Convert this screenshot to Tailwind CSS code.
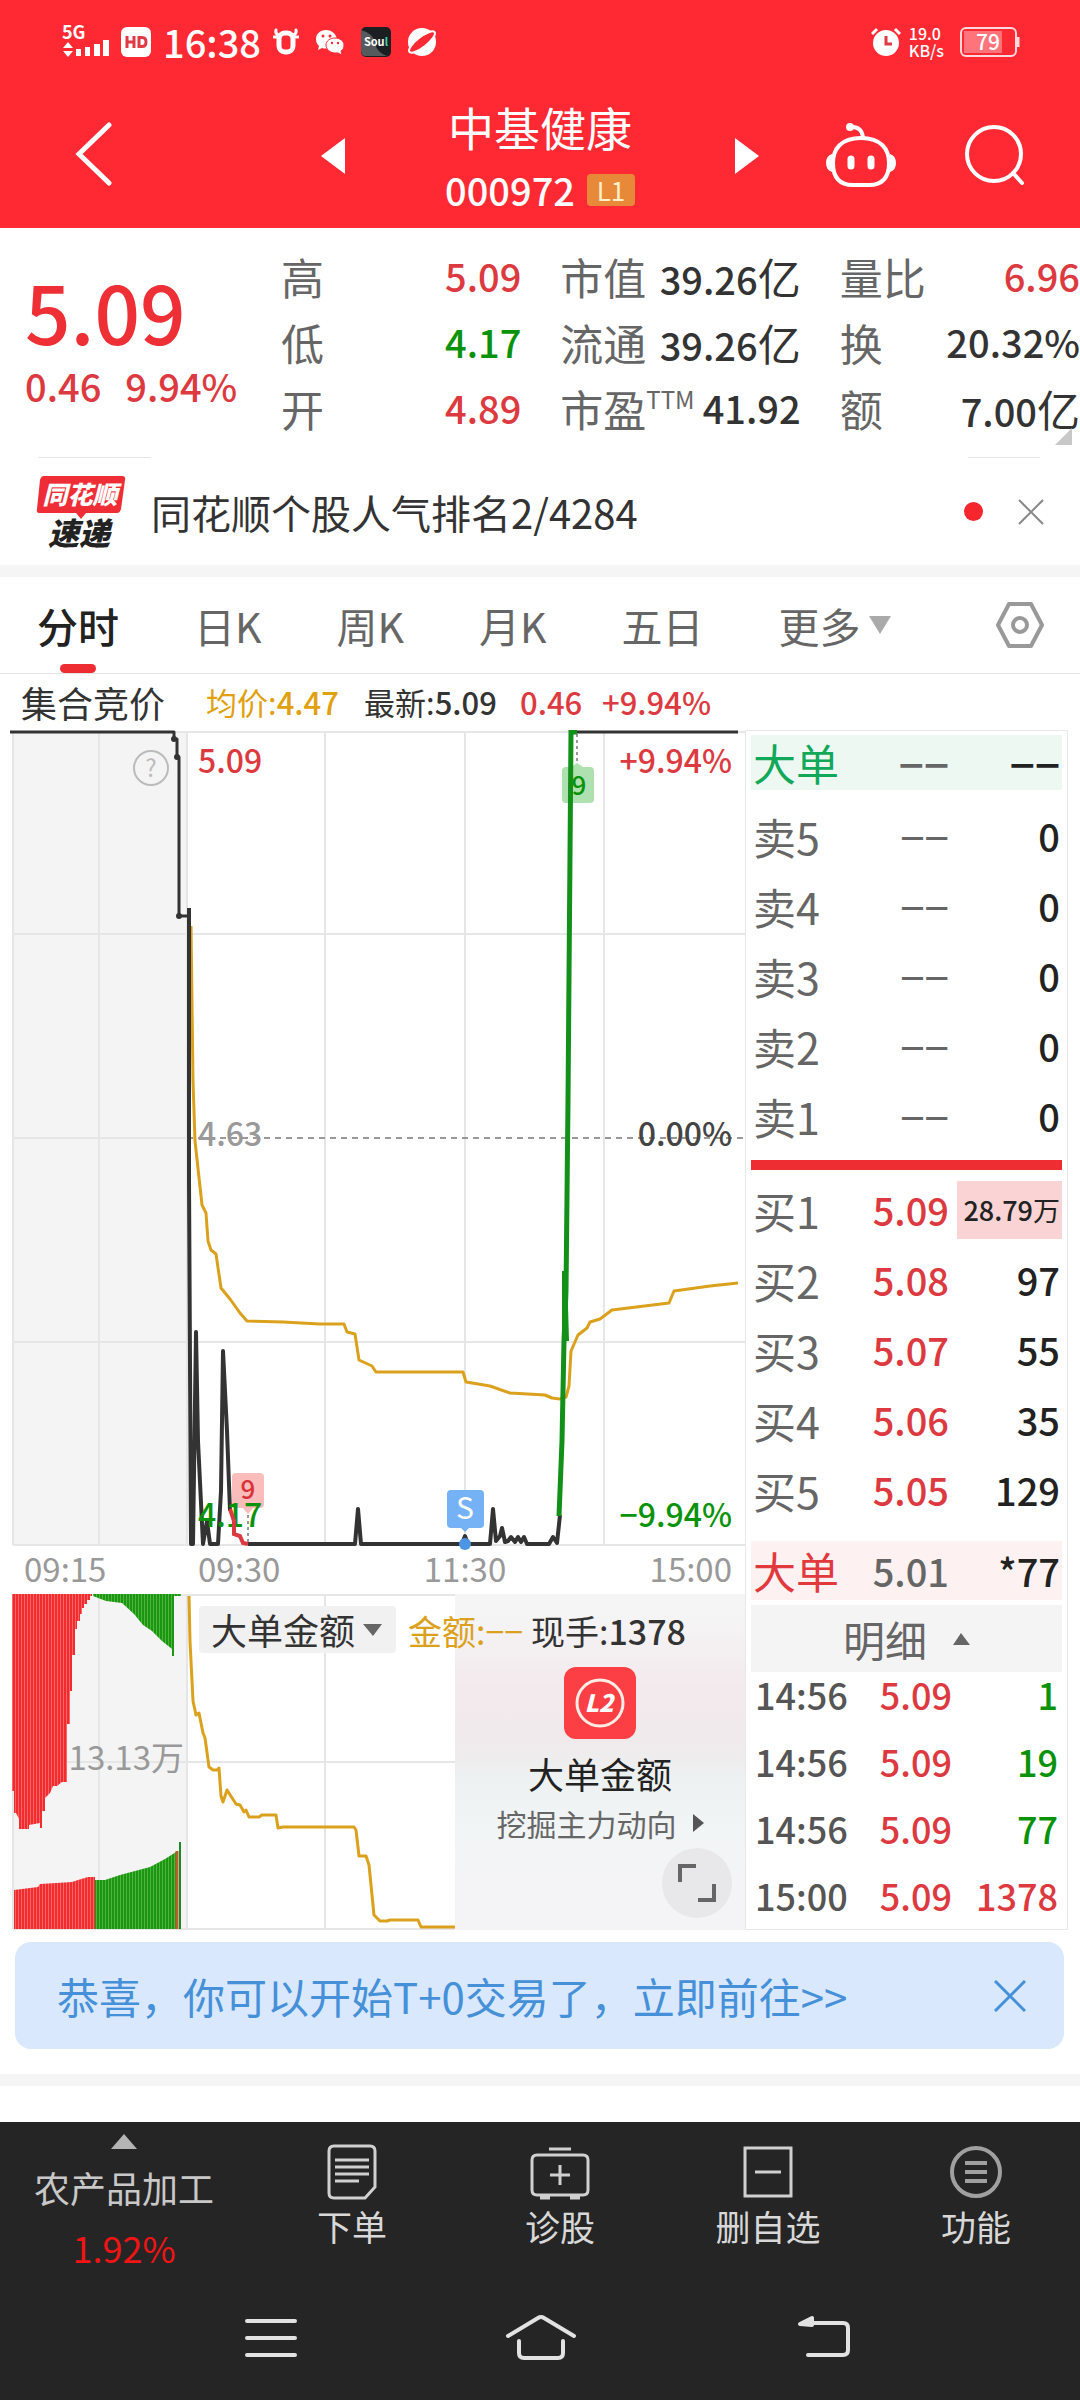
<!DOCTYPE html>
<html lang="zh-CN">
<head>
  <meta charset="UTF-8" />
  <meta name="viewport" content="width=device-width, initial-scale=1.0"/>
  <title>中基健康 000972</title>
  <script src="https://cdn.jsdelivr.net/npm/@tailwindcss/browser@4"></script>
</head>
<body class="bg-white text-[#333] font-['Noto_Sans_CJK_SC','Noto_Sans',sans-serif]">

  <!-- Header -->
  <header class="bg-[#ff2934] text-white">
    <!-- Status bar -->
    <div class="flex items-center justify-between h-[84px] pl-[61px] pr-[60px]">
      <div class="flex items-center gap-3">
        <svg class="w-12 h-9 overflow-visible" viewBox="0 0 48 36" fill="#fff">
          <text x="1" y="15" font-size="18" font-weight="700">5G</text>
          <path d="M2 24l5-6 5 6zM2 27h10l-5 6z"/>
          <path d="M15 25h5v7h-5zM24 23h5v9h-5zM33 20h6v12h-6zM42 16h6v16h-6z"/>
        </svg>
        <svg class="w-[30px] h-[30px]" viewBox="0 0 30 30">
          <rect width="30" height="30" rx="6" fill="#fff"/>
          <path d="M6 9v12M13 9v12M6 15h7M18 9v12M18 10.500h3q4 0 4 4.500t-4 4.500h-3" fill="none" stroke="#e03a45" stroke-width="3"/>
        </svg>
        <span class="text-[38px] leading-[38px] font-medium">16:38</span>
        <div class="flex items-center gap-4">
          <svg class="w-[26px] h-[30px]" viewBox="0 0 26 30" fill="none" stroke="#fff" stroke-linecap="round">
            <rect x="6" y="6" width="14" height="19" rx="6" stroke-width="5"/>
            <path d="M6 8Q2 7 3 3M20 8q4-1 3-5M1 10h4M21 10h4" stroke-width="3"/>
          </svg>
          <svg class="w-[30px] h-[30px]" viewBox="0 0 30 30">
            <path d="M11 3C5 3 1 7 1 12c0 3 1 5 3 7l-1 4 4-2q4 1 7 0l8-7C22 7 17 3 11 3z" fill="#fff"/>
            <path d="M20 11c-5 0-9 3-9 7s4 8 9 8h3l4 2-1-4c2-1 3-3 3-6 0-4-4-7-9-7z" fill="#fff" stroke="#ff2934"/>
            <g fill="#ff2934"><circle cx="8" cy="9" r="1.500"/><circle cx="15" cy="9" r="1.500"/><circle cx="17" cy="16" r="1.200"/><circle cx="23" cy="16" r="1.200"/></g>
          </svg>
          <svg class="w-[30px] h-[30px] overflow-visible" viewBox="0 0 30 30">
            <rect width="30" height="30" rx="5" fill="#1c1f21"/>
            <path d="M0 3Q12 6 14 16t12 13H5q-5 0-5-5z" fill="#555a5c"/>
            <text x="15" y="19" font-size="11" font-weight="700" fill="#fff" text-anchor="middle">Sou<tspan fill="#35d6b5">l</tspan></text>
          </svg>
          <svg class="w-[30px] h-[30px]" viewBox="0 0 30 30">
            <circle cx="15" cy="15" r="14" fill="#fff"/>
            <ellipse cx="15" cy="15" rx="16" ry="5" transform="rotate(-38 15 15)" fill="#ff2934" stroke="#fff" stroke-width="2"/>
          </svg>
        </div>
      </div>
      <div class="flex items-center gap-2">
        <svg class="w-[30px] h-[30px]" viewBox="0 0 30 30">
          <circle cx="15" cy="16" r="13" fill="#fff"/>
          <path d="M1 7l5-5M29 7l-5-5" stroke="#fff" stroke-width="3"/>
          <path d="M15 9v8h6" stroke="#e03a45" stroke-width="3" fill="none"/>
        </svg>
        <div class="text-[16px] leading-[17px] font-medium"><div>19.0</div><div>KB/s</div></div>
        <svg class="w-[60px] h-[30px] ml-2" viewBox="0 0 60 30">
          <rect x="1" y="1" width="55" height="28" rx="5" fill="none" stroke="#ffd9db" stroke-width="2"/>
          <rect x="4" y="4" width="38" height="22" fill="#ff747b"/>
          <path d="M58 10v10" stroke="#ffd9db" stroke-width="3"/>
          <text x="28" y="23" font-size="21" font-weight="500" fill="#fff" text-anchor="middle">79</text>
        </svg>
      </div>
    </div>

    <!-- Stock title -->
    <div class="flex items-center h-[144px] pr-[28px]">
      <button class="w-[188px] flex justify-center" aria-label="返回">
        <svg class="w-10 h-[68px]" viewBox="0 0 40 68" fill="none" stroke="#fff" stroke-width="5" stroke-linecap="round"><path d="M35 3L5 32l30 29"/></svg>
      </button>
      <div class="flex-1"></div>
      <button class="w-[70px] flex justify-center" aria-label="上一只">
        <svg class="w-6 h-9" viewBox="0 0 24 36" fill="#fff"><path d="M24 0v36L0 18z"/></svg>
      </button>
      <div class="w-[344px] pt-1 text-center">
        <h1 class="text-[46px] leading-[64px]">中基健康</h1>
        <div class="flex items-center justify-center gap-3 h-16">
          <span class="text-[38px] leading-[38px] font-medium">000972</span>
          <span class="bg-[#e8893a] text-[#fff0c8] text-[26px] leading-[32px] w-12 h-8 rounded-sm">L1</span>
        </div>
      </div>
      <button class="w-[70px] flex justify-center" aria-label="下一只">
        <svg class="w-6 h-9" viewBox="0 0 24 36" fill="#fff"><path d="M0 0v36l24-18z"/></svg>
      </button>
      <button class="w-[158px] flex justify-center" aria-label="助手">
        <svg class="w-[78px] h-[70px]" viewBox="0 0 78 70" fill="none" stroke="#fff" stroke-width="4">
          <path d="M39 17c20 0 28 11 28 25 0 15-7 22-20 22H31C18 64 11 57 11 42c0-14 8-25 28-25z"/>
          <path d="M28 6q12-1 13 11"/>
          <circle cx="28" cy="6" r="4" fill="#fff" stroke="none"/>
          <path d="M10 33q-6 2-6 9t6 9zM68 33q6 2 6 9t-6 9z" fill="#fff" stroke="none"/>
          <path d="M29 38v7M49 38v7" stroke-width="7" stroke-linecap="round"/>
        </svg>
      </button>
      <button class="w-[112px] flex justify-center" aria-label="搜索">
        <svg class="w-[62px] h-[62px]" viewBox="0 0 62 62" fill="none" stroke="#fff" stroke-width="4" stroke-linecap="round"><circle cx="29" cy="29" r="27"/><path d="M48 48l9 10"/></svg>
      </button>
    </div>
  </header>

  <!-- Quote summary -->
  <section class="relative flex pb-[16px]">
    <div class="w-[281px] pl-[25px] pt-9 text-[#ee2f35]">
      <div class="text-[80px] leading-[92px] font-medium">5.09</div>
      <div class="flex gap-6 text-[38px] leading-[60px] font-medium text-[#dc3a40]"><span>0.46</span><span>9.94%</span></div>
    </div>
    <dl class="flex-1 grid grid-cols-3 gap-x-[39px] pt-[15px] text-[38px] leading-[66px] font-medium [&_dt]:text-[43px] [&_dt]:font-normal [&_dt]:text-[#666] [&>div]:flex [&>div]:justify-between [&>div]:h-[66px] [&>div]:whitespace-nowrap">
      <div><dt>高</dt><dd class="text-[#dc3a40]">5.09</dd></div>
      <div><dt>市值</dt><dd>39.26<span class="font-normal text-[43px]">亿</span></dd></div>
      <div><dt>量比</dt><dd class="text-[#dc3a40]">6.96</dd></div>
      <div><dt>低</dt><dd class="text-[#0a920a]">4.17</dd></div>
      <div><dt>流通</dt><dd>39.26<span class="font-normal text-[43px]">亿</span></dd></div>
      <div><dt>换</dt><dd>20.32%</dd></div>
      <div><dt>开</dt><dd class="text-[#dc3a40]">4.89</dd></div>
      <div><dt class="flex">市盈<span class="text-[24px] leading-[48px]">TTM</span></dt><dd>41.92</dd></div>
      <div><dt>额</dt><dd>7.00<span class="font-normal text-[43px]">亿</span></dd></div>
    </dl>
    <svg class="absolute right-2 bottom-3 w-[17px] h-[17px]" viewBox="0 0 17 17"><path d="M17 0v17H0z" fill="#c8c8c8"/></svg>
  </section>

  <!-- News strip -->
  <div class="flex justify-between pl-[38px] pr-10"><div class="w-[113px] h-px bg-[#e6e6e6]"></div><div class="w-[72px] h-px bg-[#e6e6e6]"></div></div>
  <section class="flex items-center h-[107px] pl-[37px] pr-[36px]">
    <svg class="w-[90px] h-[76px] overflow-visible" viewBox="0 0 90 76" font-weight="900" font-style="italic">
      <path d="M7 2h78q4 0 3 4l-4 29q-1 4-4 4H49l-5 6-5-6H3q-4 0-3-4L3 6q1-4 4-4z" fill="#ee2d36"/>
      <text x="43" y="30" font-size="25" fill="#fff" text-anchor="middle">同花顺</text>
      <text x="42" y="71" font-size="31" fill="#222" text-anchor="middle">速递</text>
    </svg>
    <a href="#" class="flex-1 pl-6 text-[40px] leading-[48px]">同花顺个股人气排名2/4284</a>
    <span class="w-[19px] h-[19px] rounded-full bg-[#f5262e] mr-[35px]"></span>
    <button aria-label="关闭"><svg class="w-[26px] h-[26px]" viewBox="0 0 26 26" stroke="#888" stroke-width="2"><path d="M1 1l24 24M25 1L1 25"/></svg></button>
  </section>
  <div class="h-3 bg-[#f5f5f5]"></div>

  <!-- Period tabs -->
  <nav class="flex items-center h-[97px] pl-[37px] pr-[35px] border-b border-[#e4e4e4] text-[41px] leading-[48px] text-[#666]">
    <div class="flex-1 flex gap-[75px] h-full">
      <button class="relative text-[#222] font-medium">分时<span class="absolute left-[23px] bottom-0 w-9 h-[9px] rounded-md bg-[#ee2d33]"></span></button>
      <button>日K</button>
      <button>周K</button>
      <button>月K</button>
      <button>五日</button>
      <button class="flex items-center gap-2">更多<svg class="w-[22px] h-[18px]" viewBox="0 0 22 18"><path d="M0 0h22L11 18z" fill="#aaa"/></svg></button>
    </div>
    <button aria-label="设置">
      <svg class="w-[50px] h-[48px]" viewBox="0 0 50 48" fill="none" stroke="#999" stroke-width="4" stroke-linejoin="round"><path d="M14 3h22l11 21-11 21H14L3 24z"/><circle cx="25" cy="24" r="7"/></svg>
    </button>
  </nav>

  <div class="flex items-center h-[56px] pl-[21px] text-[31px] font-medium [&_span]:font-normal">
    <div class="text-[36px] font-normal w-[185px]">集合竞价</div>
    <div class="text-[#e0a010] w-[158px]"><span>均价:</span>4.47</div>
    <div class="w-[156px]"><span>最新:</span>5.09</div>
    <div class="text-[#dc3a40] w-[82px]">0.46</div>
    <div class="text-[#dc3a40]">+9.94%</div>
  </div>

  <main class="flex pl-[10px] pr-[12px]">
    <div class="flex-1 min-w-0">
      <!-- Intraday price chart -->
      <svg class="block w-full h-auto" viewBox="10 729 735 864" fill="none" font-size="32">
        <rect x="13" y="731" width="174" height="813" fill="#f4f4f4"/>
        <path d="M13 731H745M13 933H745M187 1137h-174M13 1341H745M13 1544H745M13 731V1544M99 731V1544M187 731V1544M325 731V1544M465 731V1544M604 731V1544" stroke="#e6e6e6" stroke-width="2"/>
        <path d="M187 1137H745" stroke="#999" stroke-width="2" stroke-dasharray="6 5"/>
        <g fill="#999" font-size="33">
          <text x="24" y="1581">09:15</text>
          <text x="198" y="1581">09:30</text>
          <text x="465" y="1581" text-anchor="middle">11:30</text>
          <text x="732" y="1581" text-anchor="end">15:00</text>
        </g>
        <circle cx="151" cy="767" r="17" stroke="#bbb" stroke-width="2"/>
        <text x="151" y="776" font-size="24" fill="#bbb" text-anchor="middle">?</text>

        <path d="M191 925L193 1080L195 1140L202 1204L206 1212L208 1240L211 1249L216 1253L221 1287L230 1298L240 1312L247 1320L283 1321L320 1323H344L347 1331L355 1333L359 1359L372 1365L376 1371H463L466 1381L490 1385L510 1392L545 1394L552 1397L560 1398L566 1396L569 1385L571 1350L578 1334L587 1327L590 1321L600 1318L612 1309L669 1302L674 1290L710 1285L738 1282" stroke="#dba11c" stroke-width="3" stroke-linejoin="round"/>

        <g stroke="#333" stroke-width="3" stroke-linejoin="round">
          <path d="M10 731H174V738H177V756H179V915H187"/>
          <path d="M189 907V1180L191 1543H193L196 1331L198 1440L203 1543L207 1520L210 1543H218L221 1490L223 1350L227 1430L230 1510" stroke-width="4"/>
          <path d="M248 1543H355L358 1508L361 1543H462L465 1535L468 1543H490L493 1508L496 1540L500 1535L502 1527L505 1541L508 1540L511 1536L515 1541L518 1536L521 1541L524 1536L527 1543H549L553 1536L557 1542L560 1514" stroke-width="4"/>
          <path d="M576 731H738"/>
        </g>
        <g fill="#333"><circle cx="174" cy="738" r="3"/><circle cx="177" cy="756" r="3"/><circle cx="179" cy="915" r="3"/></g>

        <!-- signal markers -->
        <path d="M236 1472h24q4 0 4 4v27q0 4-4 4h-7l-5 6-5-6h-7q-4 0-4-4v-27q0-4 4-4z" fill="#fbbcbc"/>
        <path d="M248 1514V1541M577 733V760" stroke="#333" stroke-dasharray="3 3"/>
        <text x="248" y="1498" font-size="26" font-weight="500" fill="#d9333a" text-anchor="middle">9</text>
        <path d="M566 766h5l6-4 6 4h7q4 0 4 4v28q0 4-4 4h-24q-4 0-4-4v-28q0-4 4-4z" fill="#aee0b0"/>
        <text x="579" y="794" font-size="26" font-weight="500" fill="#0a920a" text-anchor="middle">9</text>
        <path d="M559 1515L562 1440L564 1340L566 1290L568 1100L571 731H577" stroke="#12901a" stroke-width="5"/>
        <path d="M562 1270h5l2 70h-7z" fill="#12901a"/>
        <path d="M451 1489h29q4 0 4 4v30q0 4-4 4h-11l-4 4-4-4h-10q-4 0-4-4v-30q0-4 4-4z" fill="#75b1f5"/>
        <text x="465" y="1518" font-size="30" fill="#fff" text-anchor="middle">S</text>
        <circle cx="465" cy="1543" r="6" fill="#4c94e4"/>

        <g font-weight="500">
          <text x="198" y="772" fill="#dc3a40">5.09</text>
          <text x="198" y="1145" fill="#999">4.63</text>
          <text x="198" y="1526" fill="#0a920a">4.17</text>
          <text x="732" y="772" fill="#dc3a40" text-anchor="end">+9.94%</text>
          <text x="732" y="1145" fill="#444" text-anchor="end">0.00%</text>
          <text x="732" y="1526" fill="#0a920a" text-anchor="end">−9.94%</text>
        </g>
        <path d="M230 1508L234 1520V1533L240 1535L243 1542L248 1543" stroke="#dc3a40" stroke-width="4"/>
      </svg>

      <!-- Big-order amount chart -->
      <div class="relative">
        <svg class="block w-full h-auto" viewBox="10 1593 735 336" fill="none">
          <defs>
            <pattern id="redBars" width="3" height="9" patternUnits="userSpaceOnUse"><path d="M0 0h3v9H0z" fill="#f02c2f"/><path d="M0 0h1v9H0z" fill="#fb6567"/></pattern>
            <pattern id="greenBars" width="3" height="9" patternUnits="userSpaceOnUse"><path d="M0 0h3v9H0z" fill="#1c9612"/><path d="M0 0h1v9H0z" fill="#4cb53c"/></pattern>
          </defs>
          <rect x="13" y="1594" width="174" height="334" fill="#f4f4f4"/>
          <path d="M13 1594H745M13 1761H745M13 1928H745M13 1594V1928M99 1594V1928M187 1594V1928M325 1594V1928" stroke="#e6e6e6" stroke-width="2"/>
          <path d="M12 1593H92V1595H90V1599H87V1603H84V1607H82V1613H80V1620H77V1628H75V1654H72V1690H70V1723H67V1781H62L57 1785H53L50 1792L45 1797V1810H42V1827H40V1822L29 1824V1828H19V1818L16 1812H14V1790H12Z" fill="url(#redBars)"/>
          <path d="M93 1593H181V1595H174V1655H172V1648L162 1640L152 1630L143 1624L134 1613L122 1602L106 1600L93 1595Z" fill="url(#greenBars)"/>
          <path d="M14 1928V1889L38 1886L40 1883L72 1881L78 1879L88 1876H95V1928Z" fill="url(#redBars)"/>
          <path d="M95 1928V1879H105L120 1874L150 1866L165 1858L176 1851V1928Z" fill="url(#greenBars)"/>
          <path d="M177 1928V1850" stroke="#b5602a" stroke-width="3"/>
          <path d="M180 1928V1841" stroke="#1c8a20" stroke-width="2"/>
          <path d="M189 1595L190 1640L193 1700L196 1714L199 1712L203 1732L205 1737L209 1766L213 1769H217L219 1767L221 1795L223 1801L227 1789L236 1803L240 1804L244 1811L246 1809L249 1816H259L262 1814H276L278 1827L283 1826H354L356 1829L359 1855H366L369 1864L374 1914L380 1920H387L390 1919H418L421 1926H455" stroke="#dba11c" stroke-width="3" stroke-linejoin="round"/>
          <text x="184" y="1769" font-size="33" fill="#999" text-anchor="end">13.13万</text>
        </svg>

        <!-- Level 2 promo -->
        <a href="#" class="absolute right-0 top-0 bottom-0 w-[290px] flex flex-col items-center pt-[73px] bg-[linear-gradient(#f5f5f6_5%,#f3eaed_28%,#f0eaec_44%,#edf1f1_55%,#f1f5f5_70%,#f4f4f6_85%)]">
          <svg class="w-[72px] h-[72px]" viewBox="0 0 72 72">
            <rect width="72" height="72" rx="12" fill="#fb3f45"/>
            <circle cx="36" cy="36" r="23" fill="none" stroke="#ffece4" stroke-width="3"/>
            <text x="35" y="45" font-size="24" font-weight="900" font-style="italic" fill="#fff" text-anchor="middle">L2</text>
          </svg>
          <span class="text-[36px] leading-[56px] mt-[6px] text-[#222]">大单金额</span>
          <span class="flex items-center gap-4 text-[30px] leading-[44px] text-[#666]">挖掘主力动向<svg class="w-[11px] h-[18px]" viewBox="0 0 11 18"><path d="M0 0l11 9-11 9z" fill="#555"/></svg></span>
        </a>
        <button class="absolute right-[13px] bottom-3 w-[70px] h-[70px] rounded-full bg-[#e8e8ea] flex items-center justify-center" aria-label="全屏">
          <svg class="w-[38px] h-[38px]" viewBox="0 0 38 38" fill="none" stroke="#666" stroke-width="4"><path d="M2 18V2h16M36 20v16H20"/></svg>
        </button>

        <div class="absolute left-[189px] top-3 flex items-center text-[34px] leading-[47px]">
          <label class="relative block">
            <select class="appearance-none w-[197px] h-[47px] pl-3 rounded bg-[#f1f1f1] text-[36px] leading-[47px]" aria-label="指标"><option>大单金额</option></select>
            <svg class="absolute right-[14px] top-[18px] w-[19px] h-[12px]" viewBox="0 0 19 12"><path d="M0 0h19l-9 12z" fill="#666"/></svg>
          </label>
          <span class="w-[123px] ml-3 text-[#dba11c] whitespace-nowrap">金额:−−</span>
          <span>现手:<span class="font-medium">1378</span></span>
        </div>
      </div>
    </div>

    <!-- Order book -->
    <aside class="w-[323px] border border-[#e8e8e8] px-[5px] pt-1 font-medium [&_table]:w-full [&_table]:table-fixed [&_th]:w-[100px] [&_th]:text-left [&_th]:font-normal [&_th]:text-[43px] [&_th]:pl-[2px] [&_td]:text-right [&_td]:text-[38px] [&_td:nth-child(2)]:w-[98px] [&_td:last-child]:pr-[2px]">
      <table class="bg-[#eef8f3] text-[#222]">
        <tr class="h-[55px] leading-[55px]"><th class="text-[#12a85a]">大单</th><td class="text-[#666]"><span class="block text-[44px] leading-[44px]">−−</span></td><td><span class="block text-[44px] leading-[44px]">−−</span></td></tr>
      </table>
      <table class="mt-[11px] leading-[70px] text-[#222] [&_th]:text-[#666]">
        <tr class="h-[70px]"><th>卖5</th><td class="text-[#666]"><span class="block text-[44px] leading-[44px] font-normal">−−</span></td><td>0</td></tr>
        <tr class="h-[70px]"><th>卖4</th><td class="text-[#666]"><span class="block text-[44px] leading-[44px] font-normal">−−</span></td><td>0</td></tr>
        <tr class="h-[70px]"><th>卖3</th><td class="text-[#666]"><span class="block text-[44px] leading-[44px] font-normal">−−</span></td><td>0</td></tr>
        <tr class="h-[70px]"><th>卖2</th><td class="text-[#666]"><span class="block text-[44px] leading-[44px] font-normal">−−</span></td><td>0</td></tr>
        <tr class="h-[70px]"><th>卖1</th><td class="text-[#666]"><span class="block text-[44px] leading-[44px] font-normal">−−</span></td><td>0</td></tr>
      </table>
      <div class="h-[10px] mt-[9px] mb-[5px] bg-[#ee2d33]"></div>
      <table class="leading-[70px] text-[#222] [&_th]:text-[#666] [&_td:nth-child(2)]:text-[#dc3a40]">
        <tr class="h-[70px]"><th>买1</th><td>5.09</td><td class="pl-2"><span class="block -mr-[2px] pr-[2px] bg-[#fad3d4] text-[27px] leading-[58px]">28.79<span class="font-normal">万</span></span></td></tr>
        <tr class="h-[70px]"><th>买2</th><td>5.08</td><td>97</td></tr>
        <tr class="h-[70px]"><th>买3</th><td>5.07</td><td>55</td></tr>
        <tr class="h-[70px]"><th>买4</th><td>5.06</td><td>35</td></tr>
        <tr class="h-[70px]"><th>买5</th><td>5.05</td><td>129</td></tr>
      </table>
      <table class="mt-[16px] bg-[#fdf1f1] text-[#222]">
        <tr class="h-[59px] leading-[59px]"><th class="text-[#e2393f]">大单</th><td class="text-[#666]">5.01</td><td>*77</td></tr>
      </table>
      <button class="flex items-center justify-center gap-[26px] w-full h-[67px] mt-[5px] bg-[#f4f4f4] text-[42px] leading-[67px] font-normal text-[#666]">明细<svg class="w-[17px] h-[12px]" viewBox="0 0 17 12"><path d="M0 12h17L8 0z" fill="#666"/></svg></button>
      <table class="leading-[44px] text-[#dc3a40] [&_td]:text-[36px]! [&_td]:align-top [&_td:first-child]:w-[103px] [&_td:first-child]:text-left [&_td:first-child]:pl-1 [&_td:first-child]:text-[#555] [&_td:last-child]:pr-1!">
        <tr class="h-[67px]"><td>14:56</td><td>5.09</td><td class="text-[#0a920a]">1</td></tr>
        <tr class="h-[67px]"><td>14:56</td><td>5.09</td><td class="text-[#0a920a]">19</td></tr>
        <tr class="h-[67px]"><td>14:56</td><td>5.09</td><td class="text-[#0a920a]">77</td></tr>
        <tr class="h-[55px]"><td>15:00</td><td>5.09</td><td>1378</td></tr>
      </table>
    </aside>
  </main>

  <!-- T+0 banner -->
  <div class="flex items-center h-[107px] mt-3 ml-[15px] mr-4 pl-[42px] pr-[38px] rounded-2xl bg-[#d9e8fc] text-[#4590d8]">
    <a href="#" class="flex-1 text-[42px] leading-[60px]">恭喜，你可以开始T+0交易了，立即前往&gt;&gt;</a>
    <button aria-label="关闭"><svg class="w-[32px] h-[32px]" viewBox="0 0 32 32" stroke="currentColor" stroke-width="3"><path d="M1 1l30 30M31 1L1 31"/></svg></button>
  </div>
  <div class="h-3 mt-[25px] mb-9 bg-[#f5f5f5]"></div>

  <!-- Bottom toolbar -->
  <footer class="bg-[#252525] text-[#d8d8d8]">
    <div class="grid grid-cols-[248fr_208fr_208fr_208fr_208fr] h-[159px] text-[35px] leading-[44px]">
      <button class="flex flex-col items-center pt-3">
        <svg class="w-[26px] h-[15px]" viewBox="0 0 26 15"><path d="M0 15h26L13 0z" fill="#b5b5b5"/></svg>
        <span class="text-[36px] mt-4 text-[#c8c8c8]">农产品加工</span>
        <span class="text-[36px] mt-4 text-[#f01414]">1.92%</span>
      </button>
      <button class="flex flex-col items-center pt-[22px]">
        <svg class="w-[50px] h-[56px]" viewBox="0 0 50 56" fill="none" stroke="#d0d0d0" stroke-width="3"><path d="M7 2h36q5 0 5 5v36L38 54H7q-5 0-5-5V7q0-5 5-5zM8 16h34M8 23h34M8 30h34M8 37h24"/></svg>
        <span class="mt-1">下单</span>
      </button>
      <button class="flex flex-col items-center pt-[22px]">
        <svg class="w-[60px] h-[56px]" viewBox="0 0 60 56" fill="none" stroke="#d0d0d0" stroke-width="3"><path d="M19 5h22M7 11h46q5 0 5 5v30q0 5-5 5H7q-5 0-5-5V16q0-5 5-5zM30 21v20M20 31h20"/><path d="M10 53h10M40 53h10" stroke-width="5"/></svg>
        <span class="mt-1">诊股</span>
      </button>
      <button class="flex flex-col items-center pt-[22px]">
        <svg class="w-[50px] h-[56px]" viewBox="0 0 50 56" fill="none" stroke="#d0d0d0" stroke-width="3"><path d="M2 4h46v48H2zM12 28h26"/></svg>
        <span class="mt-1">删自选</span>
      </button>
      <button class="flex flex-col items-center pt-[22px]">
        <svg class="w-[52px] h-[56px]" viewBox="0 0 52 56" fill="none" stroke="#a0a0a0" stroke-width="4"><circle cx="26" cy="28" r="24"/><path d="M15 19h22M15 28h22M15 37h22"/></svg>
        <span class="mt-1">功能</span>
      </button>
    </div>
    <!-- System navigation -->
    <div class="grid grid-cols-[406fr_270fr_296fr_108fr] h-[120px] pt-[33px]">
      <button class="flex justify-end pr-[109px]" aria-label="菜单"><svg class="w-[52px] h-[48px]" viewBox="0 0 52 48" stroke="#e2e2e2" stroke-width="4" stroke-linecap="round"><path d="M2 7h48M2 24h48M2 41h48"/></svg></button>
      <button class="flex justify-center" aria-label="主页"><svg class="w-[72px] h-[48px]" viewBox="0 0 72 48" fill="none" stroke="#e2e2e2" stroke-width="4" stroke-linecap="round" stroke-linejoin="round"><path d="M3 22L33 4q3-2 6 0l30 18M14 27v12q0 5 5 5h34q5 0 5-5V27"/></svg></button>
      <button class="flex justify-center" aria-label="返回键"><svg class="w-[52px] h-[48px]" viewBox="0 0 52 48" fill="none" stroke="#e2e2e2" stroke-width="4" stroke-linecap="round" stroke-linejoin="round"><path d="M14 9h31q5 0 5 5v22q0 5-5 5H10"/><path d="M2 10L14 4v7z" fill="#e2e2e2"/></svg></button>
    </div>
  </footer>
</body>
</html>
